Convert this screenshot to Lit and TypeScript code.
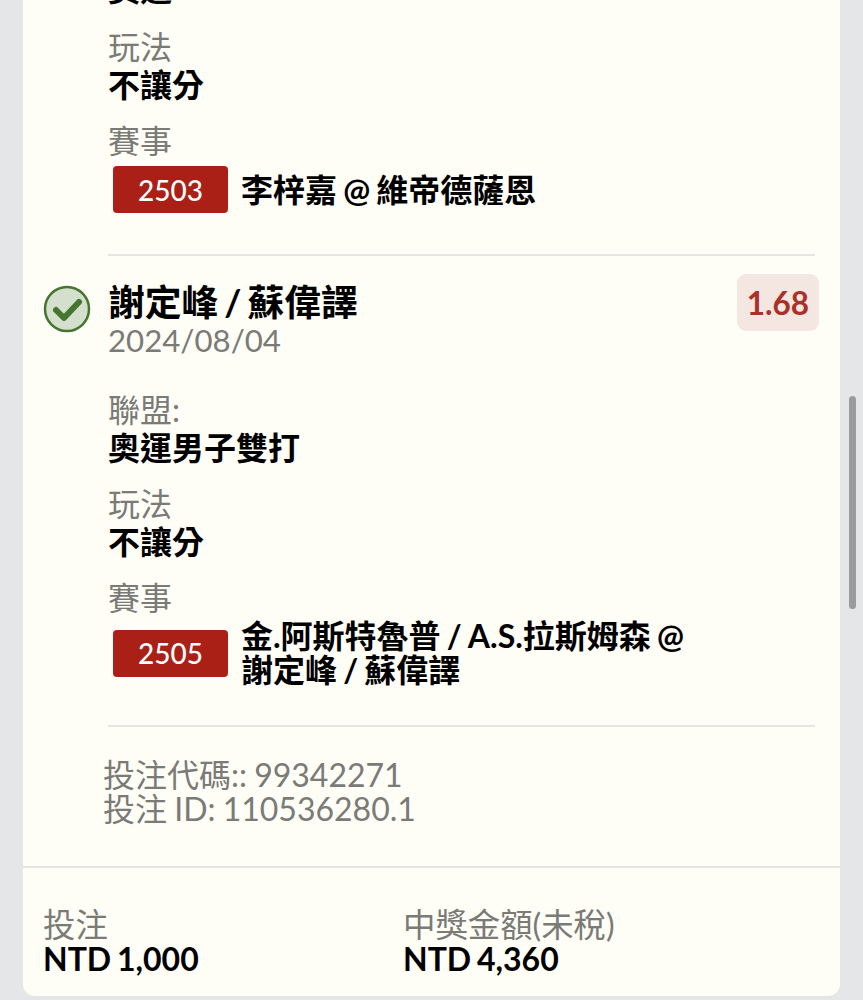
import { LitElement, html, css } from "lit";
import { customElement } from "lit/decorators.js";

@customElement("app-root")
export class AppRoot extends LitElement {
  static styles = css`
    :host {
      display: block;
      position: relative;
      height: 1000px;
      overflow: hidden;
      background: #e4e6e8;
      font-family: "Lato", "Noto Sans CJK TC", sans-serif;
      color: #000;
    }
    .card {
      margin: -30px 23px 0;
      background: #fefef6;
      border-radius: 0 0 12px 12px;
      height: 1026px;
      display: flex;
      flex-direction: column;
    }
    .body { padding: 0 25px 0 85px; flex: 1; }
    .label { font-size: 32px; line-height: 38px; color: #7a7a76; }
    .val { font-size: 32px; line-height: 38px; font-weight: 700; word-spacing: -2px; }
    .group { margin-bottom: 18px; }
    .group.first { margin-bottom: 20px; }
    .event { display: flex; align-items: center; gap: 14px; margin: 6px 0 0 5px; }
    .event.two { margin-top: 2px; }
    .no {
      width: 115px; height: 47px; flex: none; border-radius: 4px;
      background: #ab2016; color: #fff; font-size: 28px; font-weight: 500;
      display: flex; align-items: center; justify-content: center;
    }
    .ename { font-size: 32px; line-height: 34px; font-weight: 700; max-width: 450px; word-spacing: -1.6px; margin-left: -1px; }
    hr { border: 0; height: 2px; background: #e6e6e0; margin: 0; }
    hr.a { margin-top: 41px; }
    hr.b { margin-top: 38px; }
    .sel { position: relative; padding-top: 27px; }
    .check { position: absolute; left: -65px; top: 29px; width: 48px; height: 48px; }
    .odds {
      position: absolute; right: -4px; top: 18px; width: 82px; height: 57px;
      border-radius: 9px; background: #f4e6e0; color: #ab3128;
      font-size: 31.5px; font-weight: 700;
      display: flex; align-items: center; justify-content: center;
    }
    .title { font-size: 36.8px; line-height: 38px; font-weight: 700; word-spacing: -3px; }
    .date { font-size: 31.2px; line-height: 38px; color: #7a7a76; margin-bottom: 32px; }
    .codes { font-size: 32px; line-height: 34px; color: #7a7a76; margin: 31px 0 0 -5px; word-spacing: -1px; }
    .foot {
      border-top: 2px solid #e6e6e0; height: 130px; box-sizing: border-box;
      padding: 40px 21px 0 20px; display: grid; grid-template-columns: 360px 1fr;
    }
    .foot .label { line-height: 34px; font-size: 32.4px; }
    .foot .val { line-height: 34px; }
    .sb { position: absolute; left: 849px; top: 396px; width: 7px; height: 213px; border-radius: 4px; background: #9b9b9d; }
  `;

  render() {
    const check = html`<svg class="check" viewBox="0 0 48 48">
      <circle cx="24" cy="24" r="22" fill="#d5dfcd" stroke="#44762f" stroke-width="2.5"/>
      <path d="M13 25 L21 33 L36 17" fill="none" stroke="#44762f" stroke-width="6" stroke-linecap="round" stroke-linejoin="round"/>
    </svg>`;
    return html`
      <div class="card">
        <div class="body">
          <div class="group first"><div class="val">奧運</div></div>
          <div class="group"><div class="label">玩法</div><div class="val">不讓分</div></div>
          <div class="label">賽事</div>
          <div class="event"><div class="no">2503</div><div class="ename">李梓嘉 @ 維帝德薩恩</div></div>
          <hr class="a" />
          <div class="sel">
            ${check}
            <div class="odds">1.68</div>
            <div class="title">謝定峰 / 蘇偉譯</div>
            <div class="date">2024/08/04</div>
            <div class="group"><div class="label">聯盟:</div><div class="val">奧運男子雙打</div></div>
            <div class="group"><div class="label">玩法</div><div class="val">不讓分</div></div>
            <div class="label">賽事</div>
            <div class="event two"><div class="no">2505</div><div class="ename">金.阿斯特魯普 / A.S.拉斯姆森 @ 謝定峰 / 蘇偉譯</div></div>
          </div>
          <hr class="b" />
          <div class="codes"><div>投注代碼:: 99342271</div><div>投注 ID: 110536280.1</div></div>
        </div>
        <div class="foot">
          <div><div class="label">投注</div><div class="val">NTD 1,000</div></div>
          <div><div class="label">中獎金額(未稅)</div><div class="val">NTD 4,360</div></div>
        </div>
      </div>
      <div class="sb"></div>
    `;
  }
}
